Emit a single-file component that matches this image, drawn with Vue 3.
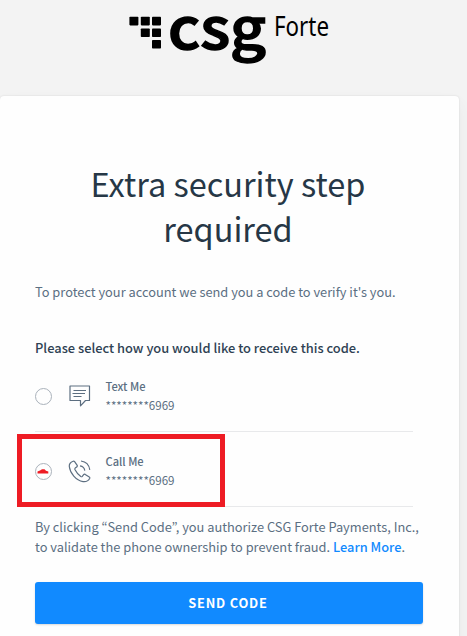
<template>
  <div class="page">
    <header class="brand">
      <svg class="logo" width="204" height="66" viewBox="0 0 204 66" role="img" aria-label="CSG Forte">
        <g fill="#000">
          <rect v-for="(s, i) in squares" :key="i" :x="s[0]" :y="s[1]" width="9" height="8.6" rx="0.8" />
        </g>
        <text class="logo-main" x="39" y="48.6" textLength="98" lengthAdjust="spacingAndGlyphs">csg</text>
        <text class="logo-sub" x="145" y="35.5" textLength="55" lengthAdjust="spacingAndGlyphs">Forte</text>
      </svg>
    </header>

    <main class="card">
      <h1 class="title">Extra security step required</h1>
      <p class="intro">To protect your account we send you a code to verify it's you.</p>
      <p class="prompt">Please select how you would like to receive this code.</p>

      <div class="options">
        <label
          v-for="option in options"
          :key="option.id"
          class="option"
          @click="selected = option.id"
        >
          <span class="radio">
            <svg v-if="selected === option.id" class="mark" width="12" height="5" viewBox="0 0 12 5">
              <path d="M0.5 4.5V2.5L3 1.5L5 0.3H7.5L9 1.7L11.3 2.5V4.5Z" fill="#ee1c24" />
            </svg>
          </span>
          <svg v-if="option.id === 'text'" class="icon" width="24" height="24" viewBox="0 0 24 24">
            <path d="M2 2H21.5V16.5H17.5L12.5 21.8V16.5H2Z" />
            <path d="M5.5 6.5H18M4.5 9.5H17M5.5 12.5H13.5" />
          </svg>
          <svg v-else class="icon" width="24" height="24" viewBox="0 0 24 24">
            <path d="M5.2 2.2C2.5 3.2 1 5 1.3 7.5C2 14 8 21.5 15 22.6C18 23 20.5 21.5 21.8 19.2C22 18.7 21.8 18.2 21.3 17.9L17.2 15.4C16.6 15.1 16 15.2 15.6 15.7L14.3 17.4C13.9 17.8 13.3 17.8 12.8 17.5C10 15.5 8.3 13.3 6.9 10.5C6.7 10 6.8 9.5 7.2 9.1L9 7.8C9.4 7.4 9.5 6.9 9.2 6.4L6.6 2.6C6.2 2.1 5.8 2 5.2 2.2Z" />
            <path d="M12 6.8C14.8 7.2 16.4 8.9 16.8 11.6M13 2C18.2 2.7 21 5.5 21.8 10.8" />
          </svg>
          <span class="details">
            <span class="name">{{ option.name }}</span>
            <span class="number">********6969</span>
          </span>
          <span v-if="selected === option.id" class="highlight"></span>
        </label>
      </div>

      <p class="consent">
        By clicking “Send Code”, you authorize CSG Forte Payments, Inc.,<br />
        to validate the phone ownership to prevent fraud. <a href="#" class="link">Learn More</a>.
      </p>
      <button class="send" type="button">SEND CODE</button>
    </main>
  </div>
</template>

<script setup>
import { ref } from 'vue'

const selected = ref('call')

const options = [
  { id: 'text', name: 'Text Me' },
  { id: 'call', name: 'Call Me' }
]

const squares = [[0.4, 16.8], [11.8, 16.8], [23, 16.8], [11.8, 28.4], [23, 28.4], [23, 39.9]]
</script>

<style>
body {
  background: #f3f3f3;
  overflow: hidden;
}
</style>

<style scoped>
.page {
  height: 636px;
  overflow: hidden;
  background: #f3f3f3;
  font-family: "Noto Sans CJK KR", "Noto Sans", sans-serif;
  color: #5b6f82;
}

.brand {
  height: 96px;
  padding-left: 129px;
  box-sizing: border-box;
}

.logo {
  display: block;
  overflow: visible;
}

.logo-main {
  font-size: 56.5px;
  font-weight: 500;
  stroke: #000;
  stroke-width: 1.5;
}

.logo-sub {
  font-family: "Noto Sans", sans-serif;
  font-size: 28px;
}

.card {
  width: 459px;
  height: 560px;
  box-sizing: border-box;
  padding: 64px 36px 0 35px;
  background: #fefefe;
  border-radius: 4px;
  box-shadow: 0 0 2px rgba(0, 0, 0, 0.12), 0 8px 16px rgba(60, 80, 80, 0.06);
}

.title {
  margin: 0 0 32px;
  padding: 0 46px 0 44px;
  font-size: 32.5px;
  line-height: 45px;
  font-weight: 400;
  text-align: center;
  color: #263746;
}

.intro {
  margin: 0 0 36px;
  font-size: 12.82px;
  line-height: 20px;
}

.prompt {
  margin: 0;
  font-size: 12.87px;
  line-height: 20px;
  font-weight: 500;
  color: #2f4254;
}

.options {
  width: 378px;
  margin-top: -1px;
}

.option {
  position: relative;
  display: flex;
  align-items: center;
  height: 75px;
  box-sizing: border-box;
  border-bottom: 1px solid #e8e9eb;
}

.radio {
  display: flex;
  align-items: center;
  justify-content: center;
  width: 17px;
  height: 17px;
  margin-top: 5px;
  box-sizing: border-box;
  border: 1px solid #aab2bb;
  border-radius: 50%;
}

.mark {
  margin-left: -2px;
}

.icon {
  margin: 4px 0 0 16px;
  fill: none;
  stroke: #5c6e80;
  stroke-width: 1.2;
  stroke-linejoin: round;
}

.details {
  display: flex;
  flex-direction: column;
  margin: 3px 0 0 13.5px;
  font-size: 11.6px;
  line-height: 19px;
}

.name {
  font-size: 11.1px;
  font-weight: 500;
}

.highlight {
  position: absolute;
  left: -18px;
  top: 2px;
  width: 208px;
  height: 73px;
  box-sizing: border-box;
  border: 5px solid #ee1c24;
}

.consent {
  margin: 10px 0 25px;
  font-size: 12.82px;
  line-height: 20px;
  white-space: nowrap;
}

.link {
  color: #118aff;
  font-weight: 500;
  text-decoration: none;
}

.send {
  display: block;
  width: 388px;
  height: 42px;
  padding: 0 2px 2px 0;
  border: 0;
  border-radius: 3px;
  background: #118aff;
  color: #fff;
  font-family: inherit;
  font-size: 12.8px;
  font-weight: 700;
  letter-spacing: 0.8px;
  box-shadow: 0 1px 2px rgba(0, 0, 0, 0.15);
}
</style>
